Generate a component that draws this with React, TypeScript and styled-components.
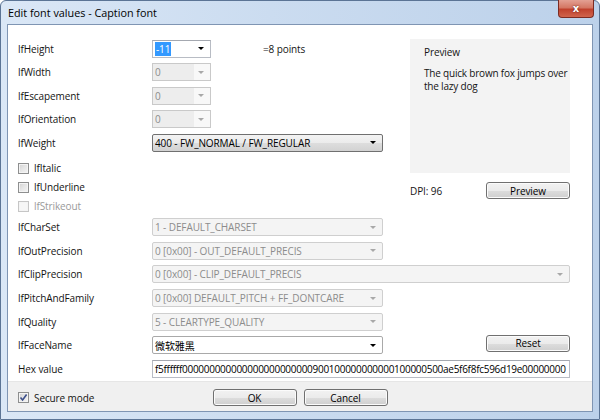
import React from 'react';
import styled, { createGlobalStyle, css } from 'styled-components';

const GlobalStyle = createGlobalStyle`
  html, body {
    margin: 0;
    padding: 0;
  }
  body {
    width: 600px;
    height: 420px;
    overflow: hidden;
    background: #ffffff;
    font-family: "Open Sans", "Noto Sans", sans-serif;
    font-size: 10px;
    letter-spacing: -0.1px;
    color: #141414;
  }
`;

const Window = styled.div`
  width: 600px;
  height: 420px;
  box-sizing: border-box;
  border: 1px solid #5b7495;
  border-radius: 6px 6px 0 0;
  background: linear-gradient(to right, #dae7f6 0%, #cbdcf0 45%, #bcd1ea 100%);
  display: flex;
  flex-direction: column;
  padding: 0 6px 7px 6px;
`;

const TitleBar = styled.div`
  height: 23px;
  display: flex;
  align-items: flex-start;
  justify-content: space-between;
`;

const Title = styled.div`
  font-size: 10.8px;
  line-height: 23px;
  color: #000;
  padding-left: 1px;
  letter-spacing: 0;
`;

const CloseButton = styled.div`
  width: 36px;
  height: 18px;
  margin-top: -1px;
  margin-right: -1px;
  box-sizing: border-box;
  border: 1px solid #7c2b22;
  border-top: none;
  border-radius: 0 0 4px 4px;
  background: linear-gradient(to bottom, #e3a093 0%, #d47764 45%, #c0412d 55%, #d0644c 100%);
  display: flex;
  align-items: center;
  justify-content: center;
  color: #fff;
  font-family: "DejaVu Sans", sans-serif;
  font-weight: bold;
  font-size: 10px;
  text-shadow: 0 0 2px #5a1a12;
`;

const Client = styled.div`
  flex: 1;
  background: #ffffff;
  border: 1px solid #7f95b3;
  display: flex;
  flex-direction: column;
`;

const Body = styled.div`
  padding: 12px 0 0 10px;
`;

const TopSection = styled.div`
  display: flex;
  gap: 27px;
`;

const LeftCol = styled.div`
  width: 365px;
  display: flex;
  flex-direction: column;
`;

const FieldRow = styled.div`
  height: 23.5px;
  display: grid;
  grid-template-columns: 134px 1fr;
  align-items: center;
`;

const Label = styled.div`
  color: #141414;
  white-space: nowrap;
`;

const Inline = styled.div`
  display: flex;
  align-items: center;
`;

const Points = styled.span`
  margin-left: 52px;
`;

const CheckGroup = styled.div`
  padding-top: 4px;
  display: flex;
  flex-direction: column;
`;

const CheckRow = styled.div<{ $disabled?: boolean; $indent?: boolean }>`
  height: 19px;
  display: flex;
  align-items: center;
  gap: 5px;
  color: ${p => (p.$disabled ? '#9a9a9a' : '#141414')};
  ${p => p.$indent && css`margin-left: 10px;`}
`;

const CheckBox = styled.div<{ $disabled?: boolean }>`
  width: 11px;
  height: 11px;
  box-sizing: border-box;
  border: 1px solid ${p => (p.$disabled ? '#c6c6c6' : '#8e8f8f')};
  background: ${p =>
    p.$disabled
      ? '#f6f6f6'
      : 'linear-gradient(135deg, #d2d2d2 0%, #e6e6e6 50%, #f4f4f4 100%)'};
  box-shadow: inset 0 0 0 1px #f4f4f4;
  display: flex;
  align-items: center;
  justify-content: center;
`;

const RightCol = styled.div`
  width: 160px;
  display: flex;
  flex-direction: column;
`;

const PreviewPanel = styled.div`
  margin-top: 2px;
  height: 134px;
  box-sizing: border-box;
  background: #f3f3f3;
  padding: 6px 2px 6px 14px;
`;

const PreviewTitle = styled.div`
  line-height: 14px;
`;

const PreviewText = styled.div`
  margin-top: 8px;
  line-height: 12.5px;
  white-space: nowrap;
  letter-spacing: -0.2px;
`;

const DpiRow = styled.div`
  margin-top: 9px;
  height: 17px;
  display: flex;
  align-items: center;
  justify-content: space-between;
`;

const BottomGrid = styled.div`
  display: grid;
  grid-template-columns: 134px 231px 27px 160px;
  grid-auto-rows: 23.6px;
  align-items: center;
`;

type ComboKind = 'edit' | 'editOff' | 'list' | 'listOff' | 'white';

const Combo = styled.div<{ $kind: ComboKind; $width?: number; $span?: boolean }>`
  height: 18px;
  box-sizing: border-box;
  width: ${p => (p.$width ? `${p.$width}px` : '100%')};
  ${p => p.$span && css`grid-column: 2 / 5;`}
  display: flex;
  align-items: center;
  padding: 0 0 0 2px;
  white-space: nowrap;
  overflow: hidden;
  ${p =>
    p.$kind === 'edit' &&
    css`
      background: #fff;
      border: 1px solid #b8bcc4;
      border-top-color: #a4a8b0;
      color: #000;
    `}
  ${p =>
    p.$kind === 'editOff' &&
    css`
      background: linear-gradient(to right, #ededed 0%, #ededed 72%, #f8f8f8 72%);
      border: 1px solid #c9c9c9;
      color: #8c8c8c;
    `}
  ${p =>
    p.$kind === 'list' &&
    css`
      background: linear-gradient(to bottom, #f3f3f3 0%, #ebebeb 50%, #dddddd 51%, #d2d2d2 100%);
      border: 1px solid #707070;
      border-radius: 2px;
      color: #000;
    `}
  ${p =>
    p.$kind === 'listOff' &&
    css`
      background: #f4f4f4;
      border: 1px solid #cfcfcf;
      border-radius: 2px;
      color: #8c8c8c;
    `}
  ${p =>
    p.$kind === 'white' &&
    css`
      background: #fff;
      border: 1px solid #a9a9a9;
      border-radius: 2px;
      color: #000;
    `}
`;

const ComboText = styled.span`
  flex: 1;
  overflow: hidden;
`;

const Arrow = styled.span<{ $off?: boolean }>`
  width: 0;
  height: 0;
  margin: 0 6px 0 4px;
  border-left: ${p => (p.$off ? '3px' : '3.5px')} solid transparent;
  border-right: ${p => (p.$off ? '3px' : '3.5px')} solid transparent;
  border-top: ${p => (p.$off ? '3px' : '3.5px')} solid ${p => (p.$off ? '#a8a8a8' : '#000')};
`;

const Selected = styled.span`
  background: #3399ff;
  color: #fff;
  padding: 0 1px;
  line-height: 13px;
`;

const CjkText = styled.span`
  font-family: "Noto Sans CJK SC", sans-serif;
`;

const HexBox = styled.div`
  grid-column: 2 / 5;
  height: 18px;
  box-sizing: border-box;
  border: 1px solid #b8bcc4;
  border-top-color: #a4a8b0;
  background: #fff;
  padding-left: 2px;
  white-space: nowrap;
  overflow: hidden;
  line-height: 16px;
  color: #000;
  letter-spacing: -0.28px;
`;

const Button = styled.div<{ $cell?: boolean }>`
  width: 84px;
  height: 17px;
  box-sizing: border-box;
  border: 1px solid #707070;
  border-radius: 3px;
  background: linear-gradient(to bottom, #f2f2f2 0%, #ebebeb 50%, #dddddd 51%, #cfcfcf 100%);
  box-shadow: inset 0 0 0 1px #fbfbfb;
  display: flex;
  align-items: center;
  justify-content: center;
  color: #000;
  ${p => p.$cell && css`grid-column: 4; justify-self: end; margin-bottom: 4px;`}
`;

const Footer = styled.div`
  flex: 1;
  background: #f0f0f0;
  border-top: 1px solid #e6e6e6;
  display: grid;
  grid-template-columns: 1fr auto 1fr;
  align-items: center;
  padding-top: 3px;
`;

const FooterButtons = styled.div`
  display: flex;
  gap: 7px;
`;

const CheckMark = () => (
  <svg width="9" height="9" viewBox="0 0 9 9">
    <path d="M1.5 4.5 L3.6 7 L7.6 1.5" fill="none" stroke="#3c4f8a" strokeWidth="1.6" />
  </svg>
);

const ComboField = ({
  kind,
  value,
  width,
  span,
}: {
  kind: ComboKind;
  value: React.ReactNode;
  width?: number;
  span?: boolean;
}) => {
  const off = kind === 'editOff' || kind === 'listOff';
  return (
    <Combo $kind={kind} $width={width} $span={span}>
      <ComboText>{value}</ComboText>
      <Arrow $off={off} />
    </Combo>
  );
};

const hexValue =
  'f5ffffff000000000000000000000000900100000000000100000500ae5f6f8fc596d19e00000000';

export default function App() {
  return (
    <>
      <GlobalStyle />
      <Window>
        <TitleBar>
          <Title>Edit font values - Caption font</Title>
          <CloseButton>x</CloseButton>
        </TitleBar>
        <Client>
          <Body>
            <TopSection>
              <LeftCol>
                <FieldRow>
                  <Label>lfHeight</Label>
                  <Inline>
                    <ComboField kind="edit" width={59} value={<Selected>-11</Selected>} />
                    <Points>=8 points</Points>
                  </Inline>
                </FieldRow>
                <FieldRow>
                  <Label>lfWidth</Label>
                  <ComboField kind="editOff" width={59} value="0" />
                </FieldRow>
                <FieldRow>
                  <Label>lfEscapement</Label>
                  <ComboField kind="editOff" width={59} value="0" />
                </FieldRow>
                <FieldRow>
                  <Label>lfOrientation</Label>
                  <ComboField kind="editOff" width={59} value="0" />
                </FieldRow>
                <FieldRow>
                  <Label>lfWeight</Label>
                  <ComboField kind="list" value="400 - FW_NORMAL / FW_REGULAR" />
                </FieldRow>
                <CheckGroup>
                  <CheckRow>
                    <CheckBox />
                    lfItalic
                  </CheckRow>
                  <CheckRow>
                    <CheckBox />
                    lfUnderline
                  </CheckRow>
                  <CheckRow $disabled>
                    <CheckBox $disabled />
                    lfStrikeout
                  </CheckRow>
                </CheckGroup>
              </LeftCol>
              <RightCol>
                <PreviewPanel>
                  <PreviewTitle>Preview</PreviewTitle>
                  <PreviewText>
                    The quick brown fox jumps over
                    <br />
                    the lazy dog
                  </PreviewText>
                </PreviewPanel>
                <DpiRow>
                  <span>DPI: 96</span>
                  <Button>Preview</Button>
                </DpiRow>
              </RightCol>
            </TopSection>
            <BottomGrid>
              <Label>lfCharSet</Label>
              <ComboField kind="listOff" value="1 - DEFAULT_CHARSET" />
              <span />
              <span />
              <Label>lfOutPrecision</Label>
              <ComboField kind="listOff" value="0 [0x00] - OUT_DEFAULT_PRECIS" />
              <span />
              <span />
              <Label>lfClipPrecision</Label>
              <ComboField kind="listOff" span value="0 [0x00] - CLIP_DEFAULT_PRECIS" />
              <Label>lfPitchAndFamily</Label>
              <ComboField kind="listOff" value="0 [0x00] DEFAULT_PITCH + FF_DONTCARE" />
              <span />
              <span />
              <Label>lfQuality</Label>
              <ComboField kind="listOff" value="5 - CLEARTYPE_QUALITY" />
              <span />
              <span />
              <Label>lfFaceName</Label>
              <ComboField kind="white" value={<CjkText>微软雅黑</CjkText>} />
              <span />
              <Button $cell>Reset</Button>
              <Label>Hex value</Label>
              <HexBox>{hexValue}</HexBox>
            </BottomGrid>
          </Body>
          <Footer>
            <CheckRow $indent>
              <CheckBox>
                <CheckMark />
              </CheckBox>
              Secure mode
            </CheckRow>
            <FooterButtons>
              <Button>OK</Button>
              <Button>Cancel</Button>
            </FooterButtons>
            <span />
          </Footer>
        </Client>
      </Window>
    </>
  );
}
